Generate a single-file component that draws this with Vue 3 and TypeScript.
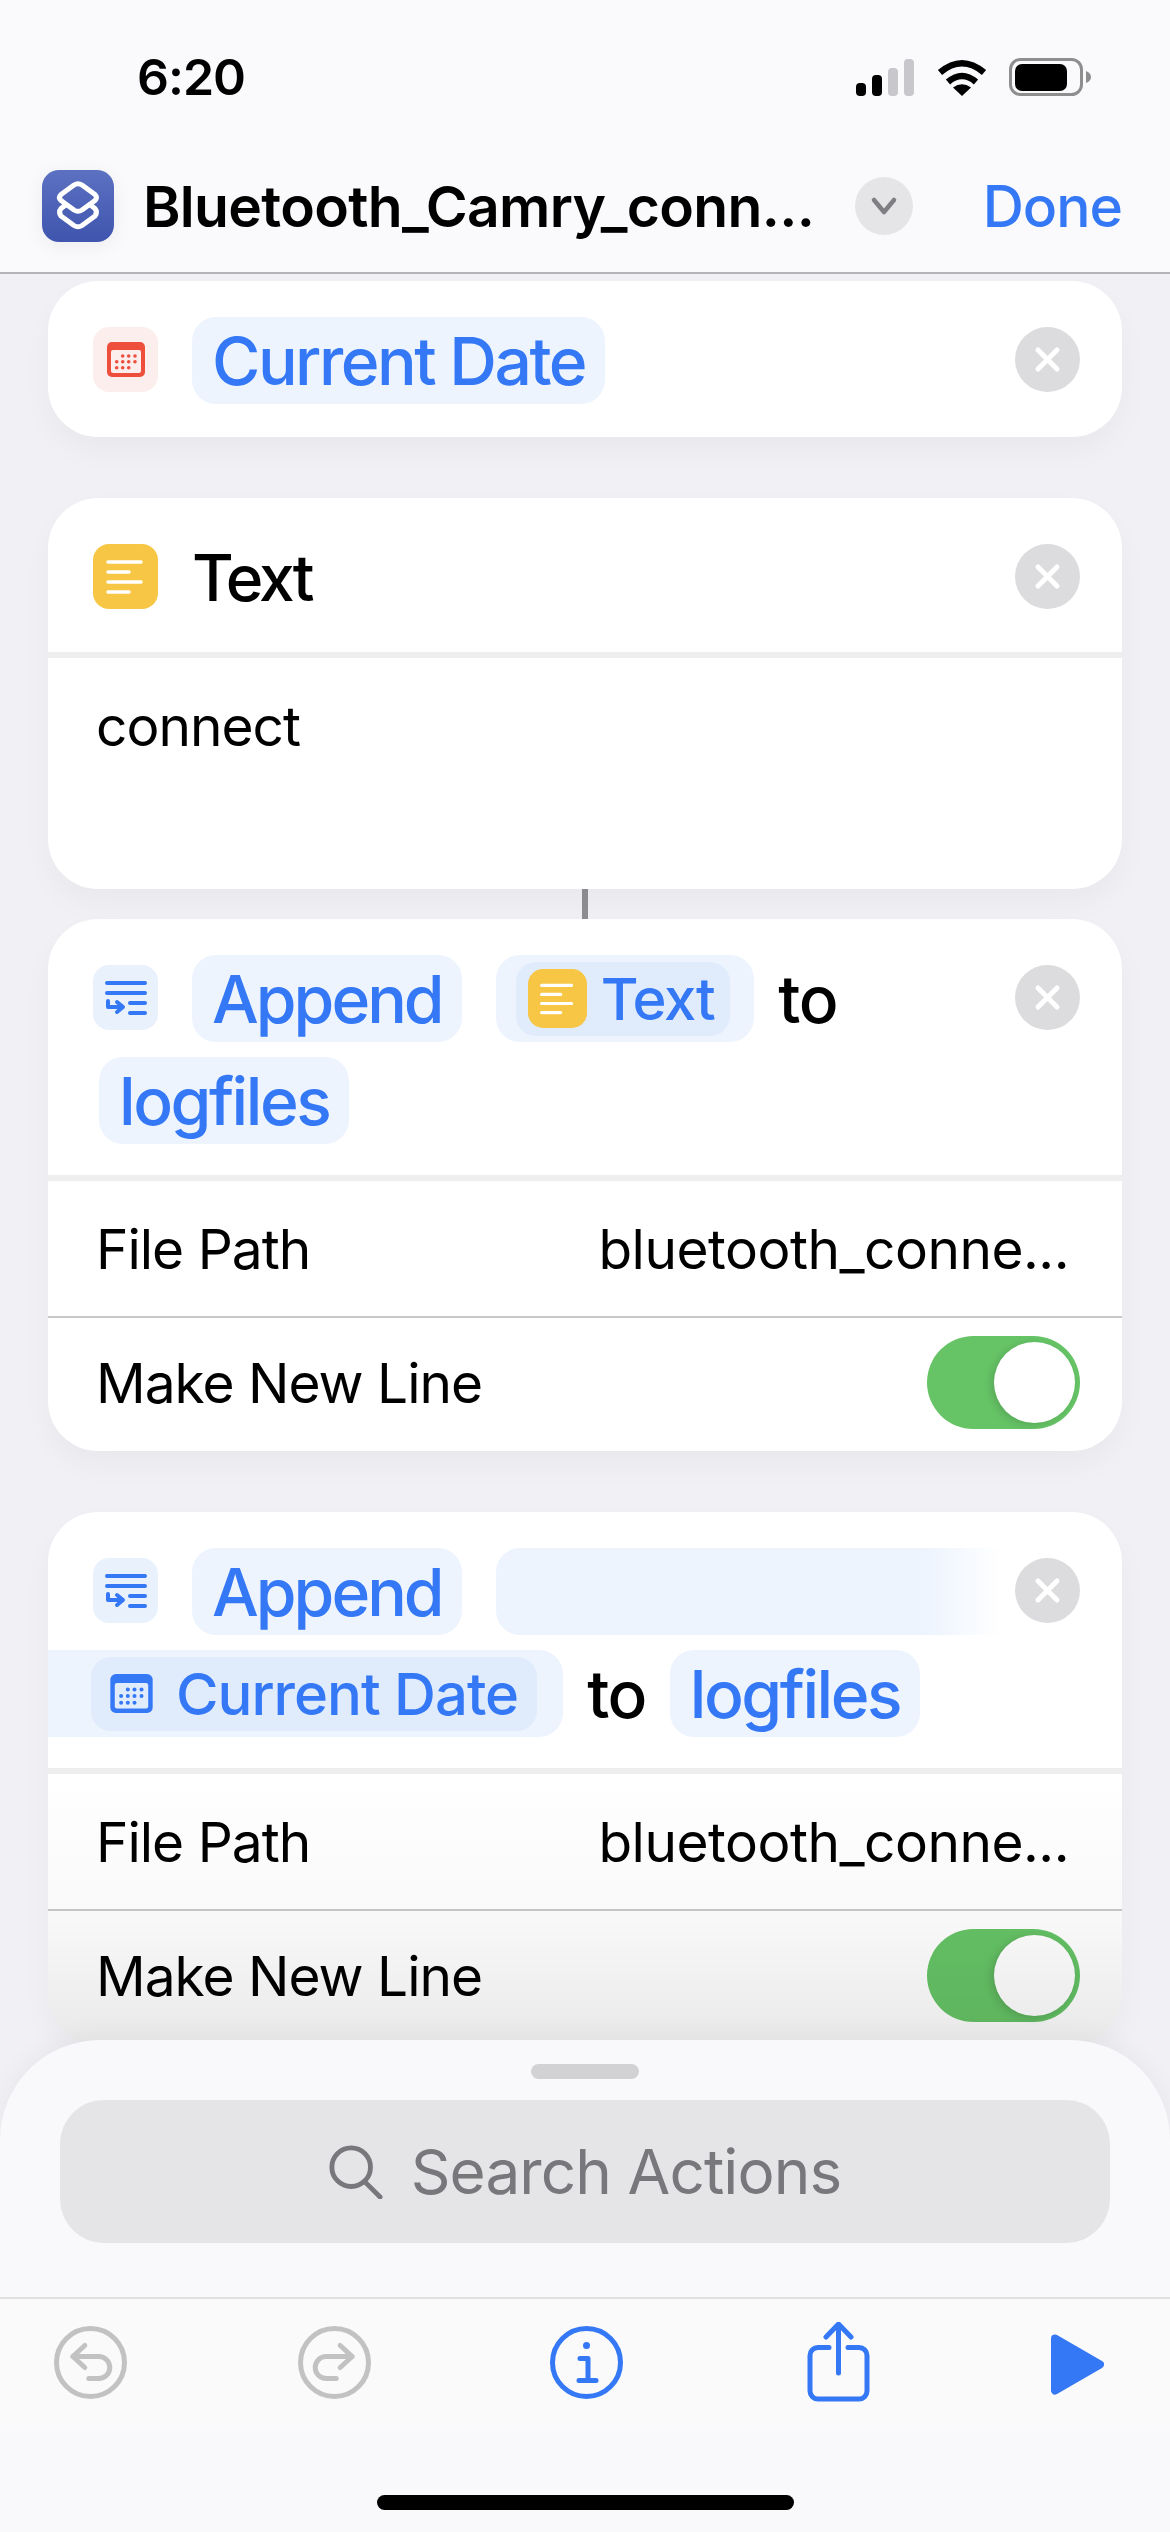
<script setup lang="ts">
const calendarDots: [number, number][] = [
  [15.7, 14], [21.7, 14], [28, 14],
  [9.7, 19.7], [15.7, 19.7], [21.7, 19.7], [28, 19.7],
  [9.7, 25.7], [15.7, 25.7], [21.7, 25.7]
]

const signalBars = [
  { x: 0, h: 13, on: true },
  { x: 16, h: 21, on: true },
  { x: 32, h: 28, on: false },
  { x: 48, h: 37, on: false }
]
</script>

<template>
  <div class="screen">
    <header class="top">
      <div class="status">
        <span class="clock">6:20</span>
        <div class="status-icons">
          <svg class="signal" width="58" height="37" viewBox="0 0 58 37">
            <rect v-for="b in signalBars" :key="b.x" :x="b.x" :y="37 - b.h" width="10" :height="b.h" rx="4" :fill="b.on ? '#000' : '#c8c8cc'" />
          </svg>
          <svg class="wifi" width="50" height="37" viewBox="0 0 50 37">
            <path d="M3 13.5Q25-5 47 13.5" fill="none" stroke="#000" stroke-width="6.5" />
            <path d="M11 23Q25 11 39 23" fill="none" stroke="#000" stroke-width="6.5" />
            <path d="M25 37L16 28.500Q25 22 34 28.500Z" fill="#000" />
          </svg>
          <svg class="battery" width="82" height="38" viewBox="0 0 82 38">
            <rect x="1.500" y="1.500" width="71" height="35" rx="10" fill="none" stroke="#8e8e8e" stroke-width="3" />
            <rect x="6" y="6" width="52" height="27" rx="7" fill="#000" />
            <path d="M77 13Q82 15 82 19T77 25Z" fill="#8e8e8e" />
          </svg>
        </div>
      </div>
      <nav class="nav">
        <div class="app-icon">
          <svg width="72" height="72" viewBox="0 0 72 72" fill="none" stroke="#fff" stroke-width="5" stroke-linejoin="round" stroke-linecap="round">
            <path d="M32 15Q36 12.500 40 15L53 24.500Q56 27.500 53 30.500L40 40Q36 42.500 32 40L19 30.500Q16 27.500 19 24.500Z" />
            <path d="M23 35.500L19 38.500Q16 42.500 19 46L32 55.500Q36 58 40 55.500L53 46Q56 42.500 53 38.500L49 35.500" />
          </svg>
        </div>
        <span class="title">Bluetooth_Camry_conn...</span>
        <div class="chevron">
          <svg width="28" height="20" viewBox="0 0 28 20" fill="none" stroke="#7f7f83" stroke-width="4.500" stroke-linecap="round" stroke-linejoin="round">
            <path d="M4 4L14 16L24 4" />
          </svg>
        </div>
        <span class="done">Done</span>
      </nav>
    </header>

    <main class="list">
      <section class="card">
        <div class="head head-single">
          <div class="tokens">
            <span class="tile tile-red">
              <svg class="cal" width="38" height="35" viewBox="0 0 38 35">
                <rect width="38" height="35" rx="5" fill="#ee4e3c" />
                <rect x="4" y="8" width="30" height="23" rx="2" fill="#fceeec" />
                <circle v-for="d in calendarDots" :key="d.join()" :cx="d[0]" :cy="d[1]" r="1.800" fill="#ee4e3c" />
              </svg>
            </span>
            <span class="chip">Current Date</span>
          </div>
          <button class="close">
            <svg width="27" height="27" viewBox="0 0 27 27" stroke="#fff" stroke-width="5" stroke-linecap="round"><path d="M4 4L23 23M23 4L4 23" /></svg>
          </button>
        </div>
      </section>

      <section class="card card-text">
        <div class="head">
          <div class="tokens">
            <span class="tile tile-yellow">
              <svg width="65" height="65" viewBox="0 0 65 65" stroke="#fff" stroke-width="3.500" stroke-linecap="round"><path d="M15 18H48M15 28H36M15 38H48M15 48H36" /></svg>
            </span>
            <span class="action-name">Text</span>
          </div>
          <button class="close">
            <svg width="27" height="27" viewBox="0 0 27 27" stroke="#fff" stroke-width="5" stroke-linecap="round"><path d="M4 4L23 23M23 4L4 23" /></svg>
          </button>
        </div>
        <div class="text-body">connect</div>
      </section>
      <div class="connector"></div>

      <section class="card">
        <div class="head">
          <div class="tokens">
            <span class="tile tile-blue">
              <svg width="65" height="65" viewBox="0 0 65 65" fill="none" stroke="#3478f6" stroke-width="4" stroke-linecap="round" stroke-linejoin="round"><path d="M14 18H52M14 28H52M37 38H52M37 48H52M15 36V42H29M24 37L30 42L24 47" /></svg>
            </span>
            <span class="chip chip-verb">Append</span>
            <span class="chip chip-var">
              <span class="var">
                <span class="var-tile">
                  <svg width="59" height="59" viewBox="0 0 65 65" stroke="#fff" stroke-width="3.500" stroke-linecap="round"><path d="M15 18H48M15 28H36M15 38H48M15 48H36" /></svg>
                </span>
                <span>Text</span>
              </span>
            </span>
            <span class="word">to</span>
            <span class="chip chip-wrapped">logfiles</span>
          </div>
          <button class="close">
            <svg width="27" height="27" viewBox="0 0 27 27" stroke="#fff" stroke-width="5" stroke-linecap="round"><path d="M4 4L23 23M23 4L4 23" /></svg>
          </button>
        </div>
        <div class="field">
          <span>File Path</span>
          <span class="value">bluetooth_conne...</span>
        </div>
        <div class="field field-line">
          <span>Make New Line</span>
          <span class="toggle"><span class="knob"></span></span>
        </div>
      </section>

      <section class="card card-last">
        <div class="head">
          <div class="tokens">
            <span class="tile tile-blue">
              <svg width="65" height="65" viewBox="0 0 65 65" fill="none" stroke="#3478f6" stroke-width="4" stroke-linecap="round" stroke-linejoin="round"><path d="M14 18H52M14 28H52M37 38H52M37 48H52M15 36V42H29M24 37L30 42L24 47" /></svg>
            </span>
            <span class="chip chip-verb">Append</span>
            <span class="chip chip-fade"></span>
            <span class="chip chip-date">
              <span class="var var-date">
                <svg class="cal" width="43" height="39" viewBox="0 0 38 35">
                  <rect width="38" height="35" rx="5" fill="#3478f6" />
                  <rect x="4" y="8" width="30" height="23" rx="2" fill="#e0ecfc" />
                  <circle v-for="d in calendarDots" :key="d.join()" :cx="d[0]" :cy="d[1]" r="1.800" fill="#3478f6" />
                </svg>
                <span>Current Date</span>
              </span>
            </span>
            <span class="word">to</span>
            <span class="chip">logfiles</span>
          </div>
          <button class="close">
            <svg width="27" height="27" viewBox="0 0 27 27" stroke="#fff" stroke-width="5" stroke-linecap="round"><path d="M4 4L23 23M23 4L4 23" /></svg>
          </button>
        </div>
        <div class="field">
          <span>File Path</span>
          <span class="value">bluetooth_conne...</span>
        </div>
        <div class="field field-line">
          <span>Make New Line</span>
          <span class="toggle"><span class="knob"></span></span>
        </div>
        <div class="fade"></div>
      </section>
    </main>

    <div class="sheet">
      <div class="handle"></div>
      <div class="search">
        <svg width="54" height="54" viewBox="0 0 56 56" fill="none" stroke="#77777c" stroke-width="5" stroke-linecap="round"><circle cx="23" cy="23" r="20" /><path d="M37 38L53 54" /></svg>
        <span>Search Actions</span>
      </div>
      <div class="toolbar">
        <svg class="tool" width="73" height="73" viewBox="0 0 73 73" fill="none" stroke="#c2c2c2" stroke-width="5" stroke-linecap="round" stroke-linejoin="round">
          <circle cx="36.500" cy="36.500" r="34" />
          <path d="M30.800 19.500L18.800 30.500L30.800 41.500M18.800 30.500H44.800A11 11 0 0 1 44.800 52.500H34.800" />
        </svg>
        <svg class="tool" width="73" height="73" viewBox="0 0 73 73" fill="none" stroke="#c2c2c2" stroke-width="5" stroke-linecap="round" stroke-linejoin="round">
          <circle cx="36.500" cy="36.500" r="34" />
          <path d="M42.200 19.500L54.200 30.500L42.200 41.500M54.200 30.500H28.200A11 11 0 0 0 28.200 52.500H38.200" />
        </svg>
        <svg class="tool" width="73" height="73" viewBox="0 0 73 73" fill="none" stroke="#3478f6" stroke-width="5" stroke-linecap="round" stroke-linejoin="round">
          <circle cx="36.500" cy="36.500" r="34" />
          <circle cx="36.500" cy="19.500" r="3.500" fill="#3478f6" stroke="none" />
          <path d="M30 32.500H38V54.500M29 54.500H46" />
        </svg>
        <svg class="tool" width="63" height="80" viewBox="0 0 63 80" fill="none" stroke="#3478f6" stroke-width="5" stroke-linecap="round" stroke-linejoin="round">
          <path d="M31.500 51V3M19 15L31.500 2L44 15" />
          <path d="M22 25.500H11A8 8 0 0 0 3 33.500V69A8 8 0 0 0 11 77H52A8 8 0 0 0 60 69V33.500A8 8 0 0 0 52 25.500H41" />
        </svg>
        <svg class="tool play" width="53" height="61" viewBox="0 0 53 61">
          <path d="M4 4.500L49 30.500L4 56.500Z" fill="#3478f6" stroke="#3478f6" stroke-width="8" stroke-linejoin="round" />
        </svg>
      </div>
      <div class="home-bar"></div>
    </div>
  </div>
</template>

<style scoped>
.screen {
  position: relative;
  display: flex;
  flex-direction: column;
  width: 1170px;
  height: 2532px;
  overflow: hidden;
  background: #f0f0f5;
  color: #000;
  font-family: Inter, "Liberation Sans", sans-serif;
}

.top {
  flex: none;
  height: 274px;
  box-sizing: border-box;
  background: #fafafc;
  border-bottom: 2px solid #b4b4b6;
}

.status {
  display: flex;
  align-items: center;
  justify-content: space-between;
  height: 38px;
  padding: 58px 79px 0 137px;
}

.clock {
  font-size: 50px;
  font-weight: 600;
  letter-spacing: -1px;
  line-height: 38px;
}

.status-icons {
  display: flex;
  align-items: center;
  gap: 23px;
}

.wifi {
  margin-right: -1px;
}

.nav {
  display: flex;
  align-items: center;
  height: 72px;
  margin-top: 74px;
  padding: 0 48px 0 42px;
}

.app-icon {
  flex: none;
  width: 72px;
  height: 72px;
  border-radius: 17px;
  background: linear-gradient(#5c71c1, #3f55ae);
  box-shadow: 0 4px 20px rgba(0, 0, 0, 0.06);
}

.title {
  flex: 1;
  margin-left: 29px;
  font-size: 57px;
  font-weight: 600;
  letter-spacing: -0.7px;
  white-space: nowrap;
}

.chevron {
  display: flex;
  flex: none;
  align-items: center;
  justify-content: center;
  width: 58px;
  height: 58px;
  margin-right: 70px;
  border-radius: 50%;
  background: #e5e5e7;
}

.done {
  flex: none;
  color: #3478f6;
  font-size: 57px;
  font-weight: 500;
  letter-spacing: -1px;
}

.list {
  flex: 1;
  min-height: 0;
  padding: 7px 48px 0;
}

.card {
  position: relative;
  margin-bottom: 61px;
  overflow: hidden;
  border-radius: 50px;
  background: #fff;
  box-shadow: 0 14px 30px rgba(0, 0, 0, 0.035);
}

.card-text {
  margin-bottom: 0;
}

.head {
  display: flex;
  align-items: flex-start;
  padding: 36px 42px 31px 45px;
  border-bottom: 6px solid #eeeeee;
}

.head-single {
  padding-bottom: 33px;
  border-bottom: 0;
}

.tokens {
  display: flex;
  flex: 1;
  flex-wrap: wrap;
  align-items: flex-start;
  gap: 15px 34px;
  min-width: 0;
}

.tile {
  display: flex;
  flex: none;
  align-items: center;
  justify-content: center;
  width: 65px;
  height: 65px;
  margin-top: 10px;
  border-radius: 16px;
}

.tile-red {
  background: #fceeec;
}

.tile-yellow {
  background: #f6c644;
}

.tile-blue {
  background: #e9f1fd;
}

.chip {
  display: flex;
  flex: none;
  align-items: center;
  height: 87px;
  box-sizing: border-box;
  padding: 0 20px;
  border-radius: 24px;
  background: #edf4fe;
  color: #3478f6;
  font-size: 66px;
  font-weight: 450;
  letter-spacing: -2.5px;
  white-space: nowrap;
}

.chip-verb {
  letter-spacing: -3px;
}

.chip-var {
  padding: 0 24px 0 20px;
}

.var {
  display: flex;
  align-items: center;
  height: 74px;
  border-radius: 20px;
  background: #e0ecfc;
  font-size: 58px;
  letter-spacing: -1.4px;
}

.chip-var .var {
  gap: 14px;
  padding: 0 16px 0 12px;
}

.var-tile {
  display: flex;
  width: 59px;
  height: 59px;
  border-radius: 15px;
  background: #f6c644;
}

.chip-wrapped {
  margin-left: 6px;
}

.chip-fade {
  width: 505px;
  border-radius: 24px 0 0 24px;
  background: linear-gradient(to right, #edf4fe 85%, rgba(237, 244, 254, 0));
}

.chip-date {
  margin-left: -45px;
  padding: 0 26px 0 43px;
  border-radius: 0 24px 24px 0;
}

.var-date {
  gap: 23px;
  padding: 0 19px;
  letter-spacing: -1px;
}

.word {
  display: flex;
  align-items: center;
  height: 87px;
  margin: 0 -10px;
  font-size: 66px;
  font-weight: 450;
  letter-spacing: -1.5px;
}

.action-name {
  display: flex;
  align-items: center;
  height: 87px;
  font-size: 64px;
  font-weight: 550;
  letter-spacing: -3px;
}

.close {
  display: flex;
  flex: none;
  align-items: center;
  justify-content: center;
  width: 65px;
  height: 65px;
  margin-top: 10px;
  padding: 0;
  border: 0;
  border-radius: 50%;
  background: #dcdcde;
}

.text-body {
  height: 231px;
  box-sizing: border-box;
  padding: 34px 48px 0 48px;
  font-size: 55px;
  line-height: 68px;
  letter-spacing: -1px;
}

.connector {
  width: 6px;
  height: 30px;
  margin: 0 auto;
  background: #8e8e93;
}

.field {
  display: flex;
  align-items: center;
  justify-content: space-between;
  height: 135px;
  box-sizing: border-box;
  padding: 0 42px 0 48px;
  font-size: 55px;
  letter-spacing: -1px;
}

.field-line {
  padding-bottom: 4px;
  border-top: 2px solid #c8c8ca;
}

.value {
  margin-right: 11px;
  letter-spacing: -0.5px;
}

.toggle {
  display: flex;
  align-items: center;
  justify-content: flex-end;
  width: 153px;
  height: 93px;
  box-sizing: border-box;
  padding-right: 5px;
  border-radius: 47px;
  background: #66c466;
}

.knob {
  width: 81px;
  height: 81px;
  border-radius: 50%;
  background: #fff;
  box-shadow: -3px 2px 8px rgba(0, 0, 0, 0.14);
}

.fade {
  position: absolute;
  inset: 262px 0 0;
  background: linear-gradient(rgba(0, 0, 0, 0), rgba(0, 0, 0, 0.025) 50%, rgba(0, 0, 0, 0.085));
  pointer-events: none;
}

.sheet {
  position: absolute;
  inset: 2040px 0 0;
  display: flex;
  flex-direction: column;
  border-radius: 100px 100px 0 0;
  background: #f9f9fb;
  box-shadow: 0 -6px 24px rgba(0, 0, 0, 0.04);
}

.handle {
  flex: none;
  width: 108px;
  height: 15px;
  margin: 24px auto 0;
  border-radius: 8px;
  background: #d2d2d4;
}

.search {
  display: flex;
  flex: none;
  align-items: center;
  justify-content: center;
  gap: 28px;
  height: 143px;
  margin: 21px 60px 54px;
  border-radius: 44px;
  background: #e5e5e7;
  color: #77777c;
  font-size: 62px;
  letter-spacing: -0.9px;
}

.toolbar {
  display: grid;
  flex: none;
  grid-template-columns: 180px 308px 196px 308px 170px;
  align-items: center;
  justify-items: center;
  height: 126px;
  border-top: 2px solid #e0e0e2;
  background: #fafafa;
}

.play {
  margin-top: 5px;
}

.home-bar {
  flex: none;
  width: 417px;
  height: 15px;
  margin: 70px auto 0;
  border-radius: 8px;
  background: #000;
}
</style>

<style>
html,
body {
  margin: 0;
  background: #f0f0f5;
}
</style>
